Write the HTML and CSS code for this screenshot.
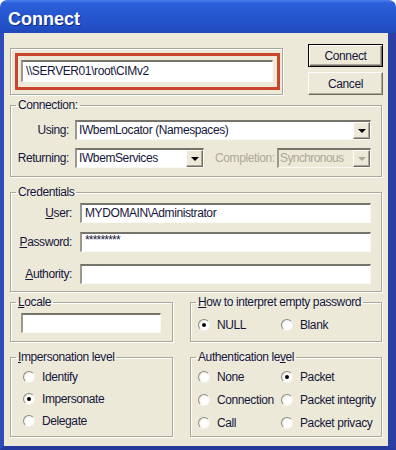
FILE: index.html
```html
<!DOCTYPE html>
<html lang="en">
<head>
    <meta charset="UTF-8">
    <title>Connect</title>
    <link rel="stylesheet" href="styles.css">
</head>
<body>
    <div class="window">
        <div class="titlebar"><span class="title">Connect</span></div>

        <div class="frame">
            <!-- Namespace path + buttons -->
            <div class="top-row">
                <div class="path-box">
                    <div class="highlight">
                        <div class="field path-field">\\SERVER01\root\CIMv2</div>
                    </div>
                </div>
                <div class="buttons">
                    <button class="btn default">Connect</button>
                    <button class="btn">Cancel</button>
                </div>
            </div>

            <fieldset class="group connection">
                <legend>Connection:</legend>
                <div class="row">
                    <span class="lbl">Using:</span>
                    <div class="combo using"><span class="combo-text">IWbemLocator (Namespaces)</span><span class="arrow"></span></div>
                </div>
                <div class="row">
                    <span class="lbl">Returning:</span>
                    <div class="combo returning"><span class="combo-text">IWbemServices</span><span class="arrow"></span></div>
                    <span class="lbl-inline disabled">Completion:</span>
                    <div class="combo sync disabled"><span class="combo-text">Synchronous</span><span class="arrow"></span></div>
                </div>
            </fieldset>

            <fieldset class="group credentials">
                <legend>Credentials</legend>
                <div class="row user">
                    <span class="lbl"><u>U</u>ser:</span>
                    <div class="field cred-field">MYDOMAIN\Administrator</div>
                </div>
                <div class="row password">
                    <span class="lbl"><u>P</u>assword:</span>
                    <div class="field cred-field stars">*********</div>
                </div>
                <div class="row authority">
                    <span class="lbl"><u>A</u>uthority:</span>
                    <div class="field cred-field"></div>
                </div>
            </fieldset>

            <div class="bottom-grid">
                <fieldset class="group locale">
                    <legend><u>L</u>ocale</legend>
                    <div class="field locale-field"></div>
                </fieldset>

                <fieldset class="group empty-pw">
                    <legend><u>H</u>ow to interpret empty password</legend>
                    <div class="radio-row">
                        <span class="radio-item"><span class="radio checked"></span>NULL</span>
                        <span class="radio-item"><span class="radio"></span>Blank</span>
                    </div>
                </fieldset>

                <fieldset class="group impersonation">
                    <legend><u>I</u>mpersonation level</legend>
                    <div class="radio-row"><span class="radio-item"><span class="radio"></span>Identify</span></div>
                    <div class="radio-row"><span class="radio-item"><span class="radio checked"></span>Impersonate</span></div>
                    <div class="radio-row"><span class="radio-item"><span class="radio"></span>Delegate</span></div>
                </fieldset>

                <fieldset class="group auth">
                    <legend>Authentication le<u>v</u>el</legend>
                    <div class="radio-row">
                        <span class="radio-item"><span class="radio"></span>None</span>
                        <span class="radio-item"><span class="radio checked"></span>Packet</span>
                    </div>
                    <div class="radio-row">
                        <span class="radio-item"><span class="radio"></span>Connection</span>
                        <span class="radio-item"><span class="radio"></span>Packet integrity</span>
                    </div>
                    <div class="radio-row">
                        <span class="radio-item"><span class="radio"></span>Call</span>
                        <span class="radio-item"><span class="radio"></span>Packet privacy</span>
                    </div>
                </fieldset>
            </div>
        </div>
    </div>
</body>
</html>
```

FILE: styles.css
```css
body {
    margin: 0;
    background-color: #fff;
    font-family: "Liberation Sans", Arial, sans-serif;
    font-size: 12px;
    letter-spacing: -0.4px;
    color: #16163a;
}

.window {
    width: 396px;
    height: 450px;
    display: flex;
    flex-direction: column;
}

.titlebar {
    height: 33px;
    flex: none;
    box-sizing: border-box;
    padding: 9px 0 0 8px;
    border-radius: 7px 7px 0 0;
    background: linear-gradient(180deg, #4a7fee 0, #2c60da 3px, #2657d0 14px, #2350c6 26px, #1f49bc 33px);
}

.title {
    font-weight: bold;
    font-size: 18px;
    line-height: 20px;
    letter-spacing: 0;
    color: #fff;
    text-shadow: 1px 1px 0 #0f2a86;
}

.frame {
    flex: 1;
    background-color: #ece9d8;
    border-left: 4px solid #2d4cb8;
    border-right: 8px solid #2a3ea6;
    border-bottom: 4px solid #26399c;
    padding: 11px 5px 0 6px;
    overflow: hidden;
}

/* top row */
.top-row {
    display: flex;
    align-items: flex-start;
}

.path-box {
    margin-top: 4px;
    width: 273px;
    height: 47px;
    box-sizing: border-box;
    border: 1px solid #aca899;
    box-shadow: inset 1px 1px 0 #fff, 1px 1px 0 #fff;
    padding: 4px 2px 4px 4px;
}

.highlight {
    width: 265px;
    height: 37px;
    box-sizing: border-box;
    border: 3px solid #c9452b;
    padding: 4px 4px 5px 3px;
}

.field {
    background-color: #fff;
    box-sizing: border-box;
    border-style: solid;
    border-width: 2px 1px 1px 2px;
    border-color: #76746a #fbfaf2 #fbfaf2 #9a988c;
    padding: 0 3px;
    line-height: 17px;
    white-space: nowrap;
    overflow: hidden;
}

.path-field {
    height: 22px;
    line-height: 18px;
}

.buttons {
    margin-left: 25px;
    display: flex;
    flex-direction: column;
    gap: 5px;
}

.btn {
    width: 75px;
    height: 23px;
    font: inherit;
    letter-spacing: inherit;
    color: #16163a;
    background-color: #ece9d8;
    border: 1px solid;
    border-color: #fff #716f64 #716f64 #fff;
    box-shadow: inset -1px -1px 0 #aca899;
    padding: 0;
}

.btn.default {
    border: 1px solid #000;
    box-shadow: inset 1px 1px 0 #fff, inset -1px -1px 0 #716f64, inset -2px -2px 0 #aca899;
}

/* group boxes */
.group {
    margin: 0;
    padding: 0;
    box-sizing: border-box;
    border: 1px solid #aca899;
    box-shadow: 1px 1px 0 #fff, inset 1px 1px 0 #fff;
    min-width: 0;
}

.group legend {
    margin-left: 5px;
    padding: 0 2px;
    line-height: 14px;
    white-space: nowrap;
}

.connection {
    width: 372px;
    margin-top: 3px;
    padding: 8px 10px 8px 0;
}

.row {
    display: flex;
    align-items: center;
}

.connection .row + .row {
    margin-top: 8px;
}

.lbl {
    width: 58px;
    margin-right: 6px;
    text-align: right;
    flex: none;
}

.lbl-inline {
    margin-left: 11px;
}

.disabled {
    color: #aca899;
}

.combo {
    height: 20px;
    box-sizing: border-box;
    display: flex;
    background-color: #fff;
    border-style: solid;
    border-width: 2px 1px 1px 2px;
    border-color: #76746a #fbfaf2 #fbfaf2 #9a988c;
}

.combo-text {
    flex: 1;
    padding-left: 2px;
    line-height: 16px;
    white-space: nowrap;
    overflow: hidden;
}

.combo.using {
    width: 296px;
}

.combo.returning {
    width: 129px;
}

.combo.sync {
    width: 94px;
    margin-left: auto;
}

.combo.sync .combo-text {
    padding-left: 1px;
    letter-spacing: -0.6px;
}

.combo.disabled {
    background-color: #ece9d8;
}

.arrow {
    width: 17px;
    height: 17px;
    flex: none;
    box-sizing: border-box;
    background-color: #ece9d8;
    border: 1px solid;
    border-color: #fff #716f64 #716f64 #fff;
    box-shadow: inset -1px -1px 0 #aca899;
    display: flex;
    align-items: center;
    justify-content: center;
}

.arrow::after {
    content: "";
    border-left: 4px solid transparent;
    border-right: 4px solid transparent;
    border-top: 4px solid #000;
    margin-top: 1px;
}

.combo.disabled .arrow::after {
    border-top-color: #aca899;
}

.credentials {
    width: 372px;
    margin-top: 8px;
    padding: 4px 10px 7px 0;
}

.credentials .lbl {
    width: 61px;
    margin-right: 8px;
}

.cred-field {
    width: 292px;
    height: 20px;
}

.row.password {
    margin-top: 9px;
}

.row.authority {
    margin-top: 12px;
}

.stars {
    line-height: 13px;
    letter-spacing: -0.8px;
}

/* bottom groups */
.bottom-grid {
    display: grid;
    grid-template-columns: 163px 192px;
    column-gap: 17px;
    row-gap: 8px;
    margin-top: 3px;
}

.locale {
    padding: 4px 0 8px 0;
}

.locale-field {
    width: 140px;
    height: 20px;
    margin-left: 10px;
}

.empty-pw {
    padding: 5px 0 4px 0;
}

.impersonation {
    padding: 2px 0 4px 0;
}

.auth {
    padding: 1px 0 2px 0;
}

.radio-row {
    display: flex;
    height: 22px;
    align-items: center;
}

.empty-pw .radio-row,
.auth .radio-row {
    padding-left: 7px;
}

.impersonation .radio-row {
    padding-left: 12px;
}

.auth .radio-row {
    height: 23px;
}

.radio-item {
    display: flex;
    align-items: center;
    width: 83px;
    white-space: nowrap;
}

.radio {
    width: 12px;
    height: 12px;
    box-sizing: border-box;
    border-radius: 50%;
    border: 1px solid;
    border-color: #8d8b80 #f6f5ee #f6f5ee #8d8b80;
    background: radial-gradient(circle at 60% 60%, #fff 40%, #e4e2d6 100%);
    margin-right: 7px;
    display: flex;
    align-items: center;
    justify-content: center;
    flex: none;
}

.radio.checked::after {
    content: "";
    width: 4px;
    height: 4px;
    border-radius: 50%;
    background-color: #000;
}
```
